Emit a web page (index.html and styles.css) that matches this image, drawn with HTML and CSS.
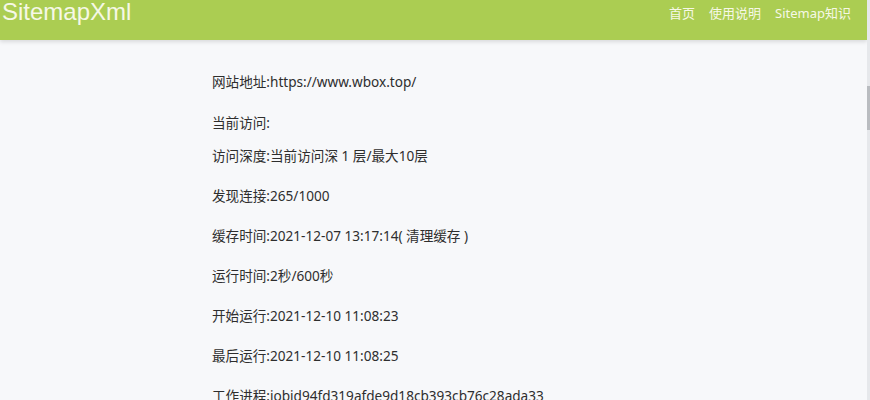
FILE: index.html
```html
<!DOCTYPE html>
<html lang="zh-CN">
<head>
<meta charset="utf-8">
<title>SitemapXml</title>
<link rel="stylesheet" href="styles.css">
</head>
<body>
<div class="page">
  <header class="topbar">
    <div class="brand">SitemapXml</div>
    <nav class="nav">
      <a class="nav-link" href="#">首页</a>
      <a class="nav-link" href="#">使用说明</a>
      <a class="nav-link" href="#">Sitemap知识</a>
    </nav>
  </header>
  <main class="content">
    <div class="row row-first">网站地址:https://www.wbox.top/</div>
    <div class="row row-tight">当前访问:</div>
    <div class="row">访问深度:当前访问深 1 层/最大10层</div>
    <div class="row">发现连接:265/1000</div>
    <div class="row">缓存时间:2021-12-07 13:17:14( 清理缓存 )</div>
    <div class="row">运行时间:2秒/600秒</div>
    <div class="row">开始运行:2021-12-10 11:08:23</div>
    <div class="row">最后运行:2021-12-10 11:08:25</div>
    <div class="row">工作进程:jobid94fd319afde9d18cb393cb76c28ada33</div>
  </main>
</div>
<div class="rail"><div class="rail-thumb"></div></div>
</body>
</html>
```

FILE: styles.css
```css
html, body {
  margin: 0;
  padding: 0;
  height: 100%;
  overflow: hidden;
}
body {
  display: flex;
  background: #f7f8fa;
  font-family: "Noto Sans", "Noto Sans CJK SC", sans-serif;
  color: #2e2e2e;
}
.page {
  flex: 1;
  min-width: 0;
}
.topbar {
  height: 40px;
  background: #abcd52;
  display: flex;
  justify-content: space-between;
  align-items: flex-start;
  padding: 0 16px 0 2px;
  box-shadow: 0 2px 4px rgba(0, 0, 0, 0.12);
}
.brand {
  font-family: "Liberation Sans", "Noto Sans CJK SC", sans-serif;
  font-size: 24px;
  line-height: 24px;
  color: #f6f8e6;
}
.nav {
  display: flex;
  gap: 14px;
}
.nav-link {
  font-size: 13px;
  line-height: 26px;
  color: #f6f8e6;
  text-decoration: none;
}
.content {
  padding: 32px 0 0 212px;
  display: flex;
  flex-direction: column;
  font-size: 13.6px;
}
.row {
  line-height: 20px;
  margin-bottom: 20px;
  white-space: nowrap;
}
.row-first {
  margin-bottom: 21px;
}
.row-tight {
  margin-bottom: 13px;
}
.rail {
  width: 3px;
  background: #e6e8eb;
  display: flex;
  flex-direction: column;
}
.rail-thumb {
  margin-top: 86px;
  height: 44px;
  background: #b9bcc0;
}
```
